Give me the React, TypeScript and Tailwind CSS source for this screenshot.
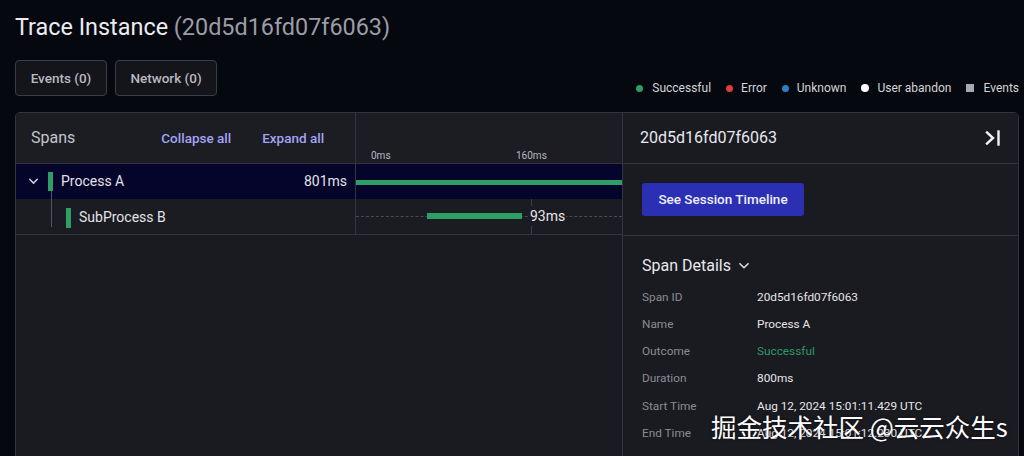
import React from "react";

const font = { fontFamily: "Roboto, 'Noto Sans', sans-serif" };

function Legend() {
  return (
    <div className="flex items-center text-[12px] text-[#d4d4da] h-4 gap-[15px]">
      <div className="flex items-center gap-[9px]"><span className="w-[7px] h-[7px] rounded-full bg-[#2e9e66]" />Successful</div>
      <div className="flex items-center gap-[8px]"><span className="w-[7px] h-[7px] rounded-full bg-[#e23a3a]" />Error</div>
      <div className="flex items-center gap-[8px]"><span className="w-[7px] h-[7px] rounded-full bg-[#2d7fc1]" />Unknown</div>
      <div className="flex items-center gap-[8px]"><span className="w-[8px] h-[8px] rounded-full bg-white" />User abandon</div>
      <div className="flex items-center gap-[9px]"><span className="w-[8px] h-[8px] bg-[#a8a8b0]" />Events</div>
    </div>
  );
}

function DetailRow({ label, value, green }: { label: string; value: string; green?: boolean }) {
  return (
    <div className="flex items-center h-[27.2px] text-[11.8px]">
      <div className="w-[115px] text-[#8b8b94]">{label}</div>
      <div className={green ? "text-[#2f9868]" : "text-[#e6e6ea]"}>{value}</div>
    </div>
  );
}

export default function App() {
  return (
    <div className="w-[1024px] h-[456px] bg-[#05080f] overflow-hidden relative" style={font}>
      <div className="pl-[15px] pr-[5px] pt-[11px]">
        <div className="text-[23.4px] leading-[32px] text-[#ececf0]">
          Trace Instance <span className="text-[#9c9ca6]">(20d5d16fd07f6063)</span>
        </div>
        <div className="mt-[17px] flex items-end justify-between">
          <div className="flex gap-[8px]">
            <button className="h-[36px] w-[92px] rounded-[4px] border border-[#3c3c46] bg-[#14141b] text-[13.5px] font-medium text-[#b9b9c2]">Events (0)</button>
            <button className="h-[36px] w-[102px] rounded-[4px] border border-[#3c3c46] bg-[#14141b] text-[13.5px] font-medium text-[#b9b9c2]">Network (0)</button>
          </div>
          <Legend />
        </div>
        <div className="mt-[16px] flex border border-[#34343d] rounded-t-[5px] bg-[#1a1a21] h-[400px] w-[1004px]">
          {/* Spans column + timeline */}
          <div className="flex flex-col w-[606px] shrink-0">
            <div className="flex h-[51px] border-b border-[#34343d]">
              <div className="w-[340px] shrink-0 border-r border-[#34343d] bg-[#1c1c23] flex items-center pl-[15px]">
                <span className="text-[16px] text-[#c4c4cc]">Spans</span>
                <span className="ml-[86px] text-[13.5px] font-medium text-[#a3a4f2]">Collapse all</span>
                <span className="ml-[31px] text-[13.5px] font-medium text-[#a3a4f2]">Expand all</span>
              </div>
              <div className="flex-1 relative bg-[#1c1c23]">
                <span className="absolute left-[15px] top-[37px] text-[10px] leading-[12px] text-[#b8b8c0]">0ms</span>
                <span className="absolute left-[160px] top-[37px] text-[10px] leading-[12px] text-[#b8b8c0]">160ms</span>
              </div>
            </div>
            {/* Process A row */}
            <div className="flex h-[35px] bg-[#05052b]">
              <div className="w-[340px] shrink-0 border-r border-[#34343d] flex items-center relative">
                <svg className="ml-[11px]" width="13" height="13" viewBox="0 0 24 24" fill="none" stroke="#d0d0d8" strokeWidth="2.8" strokeLinecap="round" strokeLinejoin="round"><path d="M5 8l7 7 7-7" /></svg>
                <span className="ml-[8px] w-[5px] h-[19px] bg-[#2e9e66]" />
                <span className="ml-[8px] text-[14px] text-[#e2e2e8]">Process A</span>
                <span className="ml-auto mr-[8px] text-[14px] text-[#e2e2e8]">801ms</span>
                <span className="absolute left-[35px] top-[27px] w-[1px] h-[36px] bg-[#55555e]" />
              </div>
              <div className="flex-1 flex items-center">
                <div className="w-full h-[5px] bg-[#2e9e66] mt-[1px]" />
              </div>
            </div>
            {/* SubProcess B row */}
            <div className="flex h-[36px] border-b border-[#34343d] bg-[#1b1b22]">
              <div className="w-[340px] shrink-0 border-r border-[#34343d] flex items-center">
                <span className="ml-[50px] w-[5px] h-[20px] bg-[#2e9e66] mt-[2px]" />
                <span className="ml-[8px] text-[14px] text-[#e2e2e8] mt-[2px]">SubProcess B</span>
              </div>
              <div className="flex-1 relative">
                <div className="absolute left-0 right-0 top-[17px] border-t border-dashed border-[#4a4a52]" />
                <div className="absolute left-[175px] top-0 bottom-0 w-[1px] bg-[#3a3a42]" />
                <div className="absolute left-[71px] top-[14px] w-[95px] h-[6px] bg-[#2e9e66]" />
                <span className="absolute left-[173px] top-[7px] text-[14px] leading-[20px] text-[#e6e6ea] px-[1px] bg-[#1b1b22]">93ms</span>
              </div>
            </div>
            <div className="flex-1 bg-[#1a1a21]" />
          </div>
          {/* Details panel */}
          <div className="flex-1 border-l border-[#34343d] flex flex-col bg-[#1a1a21]">
            <div className="h-[51px] border-b border-[#34343d] flex items-center pl-[17px] pr-[15px]">
              <span className="text-[16px] text-[#e8e8ee]">20d5d16fd07f6063</span>
              <svg className="ml-auto" width="20" height="20" viewBox="0 0 20 20" fill="none" stroke="#f2f2f5" strokeWidth="2.4" strokeLinecap="square"><path d="M4 4.5l6 5.5-6 5.5" /><path d="M15.5 3.5v13" /></svg>
            </div>
            <div className="h-[72px] border-b border-[#34343d] flex items-center pl-[19px]">
              <button className="h-[33px] w-[162px] rounded-[3px] bg-[#2b2fb3] text-[13.5px] font-medium text-[#eeeefa]">See Session Timeline</button>
            </div>
            <div className="pl-[19px] pt-[19px]">
              <div className="flex items-center gap-[6px] text-[16px] text-[#e8e8ee] h-[22px]">
                Span Details
                <svg width="14" height="14" viewBox="0 0 24 24" fill="none" stroke="#e0e0e6" strokeWidth="2.6" strokeLinecap="round" strokeLinejoin="round"><path d="M5 8l7 7 7-7" /></svg>
              </div>
              <div className="mt-[7px]">
                <DetailRow label="Span ID" value="20d5d16fd07f6063" />
                <DetailRow label="Name" value="Process A" />
                <DetailRow label="Outcome" value="Successful" green />
                <DetailRow label="Duration" value="800ms" />
                <DetailRow label="Start Time" value="Aug 12, 2024 15:01:11.429 UTC" />
                <DetailRow label="End Time" value="Aug 12, 2024 15:01:12.230 UTC" />
              </div>
            </div>
          </div>
        </div>
      </div>
      <div
        className="absolute left-[711px] top-[410px] text-[25.5px] leading-[32px] text-white whitespace-nowrap"
        style={{ fontFamily: "'Noto Sans CJK SC', 'Noto Sans', sans-serif", textShadow: "0 0 3px rgba(0,0,0,0.6)" }}
      >
        掘金技术社区 @云云众生s
      </div>
    </div>
  );
}
